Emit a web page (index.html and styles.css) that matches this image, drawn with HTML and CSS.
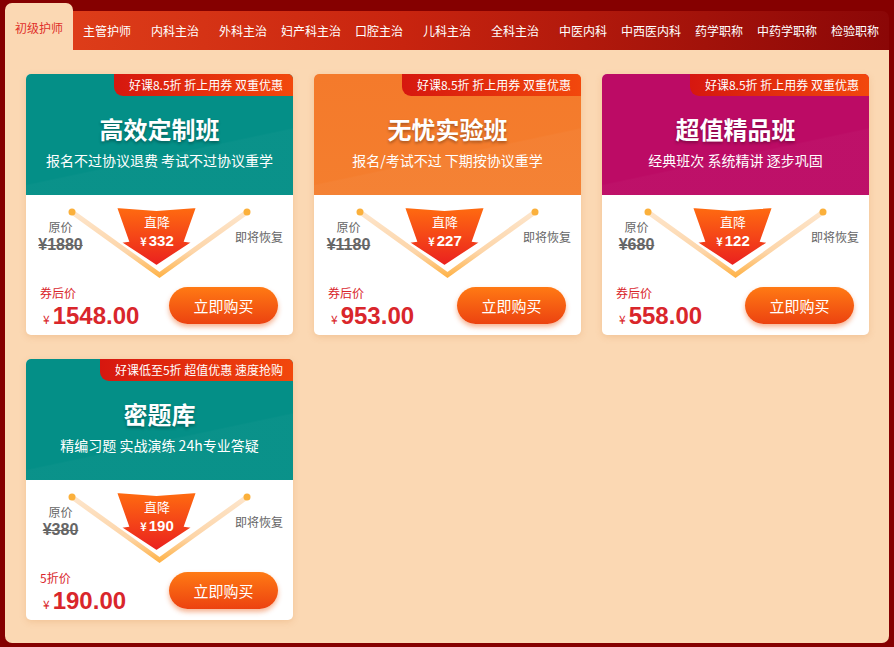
FILE: index.html
```html
<!DOCTYPE html>
<html lang="zh">
<head>
    <meta charset="UTF-8">
    <title>课程优惠</title>
    <link rel="stylesheet" href="styles.css">
</head>
<body>
<div class="page">
    <div class="tabs">
        <div class="tab active">初级护师</div>
        <div class="tab">主管护师</div>
        <div class="tab">内科主治</div>
        <div class="tab">外科主治</div>
        <div class="tab">妇产科主治</div>
        <div class="tab">口腔主治</div>
        <div class="tab">儿科主治</div>
        <div class="tab">全科主治</div>
        <div class="tab">中医内科</div>
        <div class="tab">中西医内科</div>
        <div class="tab">药学职称</div>
        <div class="tab">中药学职称</div>
        <div class="tab">检验职称</div>
    </div>

    <div class="panel">
        <div class="grid">

            <div class="card">
                <div class="head teal">
                    <div class="badge">好课8.5折 折上用券 双重优惠</div>
                    <div class="title">高效定制班</div>
                    <div class="sub">报名不过协议退费 考试不过协议重学</div>
                </div>
                <div class="bottom">
                    <svg class="deco" viewBox="0 0 267 90" width="267" height="90">
                        <defs>
                            <linearGradient id="fadeL" x1="0" x2="1"><stop offset="0" stop-color="#fde6cf" stop-opacity="0"/><stop offset="1" stop-color="#fcd2a6"/></linearGradient>
                            <linearGradient id="fadeR" x1="1" x2="0"><stop offset="0" stop-color="#fde6cf" stop-opacity="0"/><stop offset="1" stop-color="#fcd2a6"/></linearGradient>
                            <linearGradient id="band" gradientUnits="userSpaceOnUse" x1="0" y1="17" x2="0" y2="84"><stop offset="0" stop-color="#fde5cb"/><stop offset="0.6" stop-color="#fdd5a8"/><stop offset="1" stop-color="#ffb040"/></linearGradient>
                        </defs>
                        <path d="M0 17H46" stroke="url(#fadeL)" stroke-width="2"/>
                        <path d="M221 17H267" stroke="url(#fadeR)" stroke-width="2"/>
                        <polyline points="46,17 133.5,80 221,17" fill="none" stroke="url(#band)" stroke-width="5"/>
                        <circle cx="46" cy="17" r="3.5" fill="#fbb03b"/>
                        <circle cx="221" cy="17" r="3.5" fill="#fbb03b"/>
                    </svg>
                    <div class="compare">
                        <div class="orig"><div class="orig-label">原价</div><div class="old">¥1880</div></div>
                        <div class="drop">
                            <svg viewBox="0 0 83 61" width="83" height="61"><defs><linearGradient id="arr" x1="0" y1="0" x2="0" y2="1"><stop offset="0" stop-color="#ff6c10"/><stop offset="1" stop-color="#ea1f1f"/></linearGradient></defs><polygon points="1,1 41.5,4 82,1 70,35 78,36 41.5,60 5,36 13,35" fill="url(#arr)" stroke="#fff" stroke-width="2"/></svg>
                            <div class="drop-text"><div class="drop-label">直降</div><div class="amt"><small>¥</small>332</div></div>
                        </div>
                        <div class="restore">即将恢复</div>
                    </div>
                    <div class="buy">
                        <div class="after"><div class="label">券后价</div><div class="price"><small>¥</small>1548.00</div></div>
                        <button class="btn">立即购买</button>
                    </div>
                </div>
            </div>

            <div class="card">
                <div class="head orange">
                    <div class="badge">好课8.5折 折上用券 双重优惠</div>
                    <div class="title">无忧实验班</div>
                    <div class="sub">报名/考试不过 下期按协议重学</div>
                </div>
                <div class="bottom">
                    <svg class="deco" viewBox="0 0 267 90" width="267" height="90">
                        <path d="M0 17H46" stroke="url(#fadeL)" stroke-width="2"/>
                        <path d="M221 17H267" stroke="url(#fadeR)" stroke-width="2"/>
                        <polyline points="46,17 133.5,80 221,17" fill="none" stroke="url(#band)" stroke-width="5"/>
                        <circle cx="46" cy="17" r="3.5" fill="#fbb03b"/>
                        <circle cx="221" cy="17" r="3.5" fill="#fbb03b"/>
                    </svg>
                    <div class="compare">
                        <div class="orig"><div class="orig-label">原价</div><div class="old">¥1180</div></div>
                        <div class="drop">
                            <svg viewBox="0 0 83 61" width="83" height="61"><polygon points="1,1 41.5,4 82,1 70,35 78,36 41.5,60 5,36 13,35" fill="url(#arr)" stroke="#fff" stroke-width="2"/></svg>
                            <div class="drop-text"><div class="drop-label">直降</div><div class="amt"><small>¥</small>227</div></div>
                        </div>
                        <div class="restore">即将恢复</div>
                    </div>
                    <div class="buy">
                        <div class="after"><div class="label">券后价</div><div class="price"><small>¥</small>953.00</div></div>
                        <button class="btn">立即购买</button>
                    </div>
                </div>
            </div>

            <div class="card">
                <div class="head magenta">
                    <div class="badge">好课8.5折 折上用券 双重优惠</div>
                    <div class="title">超值精品班</div>
                    <div class="sub">经典班次 系统精讲 逐步巩固</div>
                </div>
                <div class="bottom">
                    <svg class="deco" viewBox="0 0 267 90" width="267" height="90">
                        <path d="M0 17H46" stroke="url(#fadeL)" stroke-width="2"/>
                        <path d="M221 17H267" stroke="url(#fadeR)" stroke-width="2"/>
                        <polyline points="46,17 133.5,80 221,17" fill="none" stroke="url(#band)" stroke-width="5"/>
                        <circle cx="46" cy="17" r="3.5" fill="#fbb03b"/>
                        <circle cx="221" cy="17" r="3.5" fill="#fbb03b"/>
                    </svg>
                    <div class="compare">
                        <div class="orig"><div class="orig-label">原价</div><div class="old">¥680</div></div>
                        <div class="drop">
                            <svg viewBox="0 0 83 61" width="83" height="61"><polygon points="1,1 41.5,4 82,1 70,35 78,36 41.5,60 5,36 13,35" fill="url(#arr)" stroke="#fff" stroke-width="2"/></svg>
                            <div class="drop-text"><div class="drop-label">直降</div><div class="amt"><small>¥</small>122</div></div>
                        </div>
                        <div class="restore">即将恢复</div>
                    </div>
                    <div class="buy">
                        <div class="after"><div class="label">券后价</div><div class="price"><small>¥</small>558.00</div></div>
                        <button class="btn">立即购买</button>
                    </div>
                </div>
            </div>

            <div class="card">
                <div class="head teal">
                    <div class="badge">好课低至5折 超值优惠 速度抢购</div>
                    <div class="title">密题库</div>
                    <div class="sub">精编习题 实战演练 24h专业答疑</div>
                </div>
                <div class="bottom">
                    <svg class="deco" viewBox="0 0 267 90" width="267" height="90">
                        <path d="M0 17H46" stroke="url(#fadeL)" stroke-width="2"/>
                        <path d="M221 17H267" stroke="url(#fadeR)" stroke-width="2"/>
                        <polyline points="46,17 133.5,80 221,17" fill="none" stroke="url(#band)" stroke-width="5"/>
                        <circle cx="46" cy="17" r="3.5" fill="#fbb03b"/>
                        <circle cx="221" cy="17" r="3.5" fill="#fbb03b"/>
                    </svg>
                    <div class="compare">
                        <div class="orig"><div class="orig-label">原价</div><div class="old">¥380</div></div>
                        <div class="drop">
                            <svg viewBox="0 0 83 61" width="83" height="61"><polygon points="1,1 41.5,4 82,1 70,35 78,36 41.5,60 5,36 13,35" fill="url(#arr)" stroke="#fff" stroke-width="2"/></svg>
                            <div class="drop-text"><div class="drop-label">直降</div><div class="amt"><small>¥</small>190</div></div>
                        </div>
                        <div class="restore">即将恢复</div>
                    </div>
                    <div class="buy">
                        <div class="after"><div class="label">5折价</div><div class="price"><small>¥</small>190.00</div></div>
                        <button class="btn">立即购买</button>
                    </div>
                </div>
            </div>

        </div>
    </div>
</div>
</body>
</html>
```

FILE: styles.css
```css
* {
    margin: 0;
    padding: 0;
    box-sizing: border-box;
    font-family: "Noto Sans CJK SC", "Noto Sans", sans-serif;
}
body {
    background: #850000;
    width: 894px;
    height: 647px;
    overflow: hidden;
}
.page {
    padding: 11px 5px 4px 5px;
}
.tabs {
    display: flex;
    height: 39px;
    background: linear-gradient(90deg, #e2421b 0%, #c8240f 45%, #8b0707 100%);
    border-radius: 0 7px 0 0;
}
.tab {
    flex: 1;
    color: #fff;
    font-size: 12px;
    line-height: 39px;
    text-align: center;
    white-space: nowrap;
}
.tab.active {
    margin-top: -8px;
    height: 47px;
    padding-top: 3px;
    line-height: 44px;
    background: #fbd8b3;
    color: #e0302a;
    border-radius: 7px 7px 0 0;
}
.panel {
    height: 593px;
    background: #fbd8b3;
    border-radius: 0 0 7px 7px;
    padding: 24px 21px;
}
.grid {
    display: grid;
    grid-template-columns: repeat(3, 267px);
    column-gap: 21px;
    row-gap: 24px;
}
.card {
    height: 261px;
    background: #fff;
    border-radius: 5px;
    overflow: hidden;
    box-shadow: 0 2px 6px rgba(220, 140, 70, 0.25);
}
.head {
    position: relative;
    height: 121px;
    padding-top: 40px;
    text-align: center;
    color: #fff;
}
.teal {
    background: linear-gradient(168deg, rgba(255, 255, 255, 0) 62%, rgba(255, 255, 255, 0.025) 63%), #048f87;
}
.orange {
    background: linear-gradient(168deg, rgba(255, 255, 255, 0) 62%, rgba(255, 255, 255, 0.03) 63%), linear-gradient(180deg, #f47a2b, #f47e2e);
}
.magenta {
    background: linear-gradient(168deg, rgba(255, 255, 255, 0) 62%, rgba(255, 255, 255, 0.025) 63%), #bc0b65;
}
.badge {
    position: absolute;
    top: 0;
    right: 0;
    height: 22px;
    line-height: 22px;
    padding: 0 10px 0 15px;
    font-size: 12px;
    white-space: nowrap;
    background: linear-gradient(90deg, #d6170f, #f2480c);
    border-radius: 0 0 0 9px;
}
.title {
    font-size: 24px;
    font-weight: bold;
    line-height: 30px;
    text-shadow: 0 2px 3px rgba(0, 0, 0, 0.3);
}
.sub {
    margin-top: 7px;
    font-size: 14px;
    line-height: 18px;
}
.bottom {
    position: relative;
    height: 140px;
}
.deco {
    position: absolute;
    top: 0;
    left: 0;
}
.compare {
    position: relative;
    display: flex;
    justify-content: space-between;
    align-items: flex-start;
    height: 85px;
    padding: 0 8px 0 9px;
    color: #666;
}
.orig {
    width: 51px;
    margin-top: 25px;
    text-align: center;
}
.orig-label {
    font-size: 12px;
    line-height: 14px;
}
.old {
    margin-top: 2px;
    font-family: "Liberation Sans", Arial, sans-serif;
    font-size: 16px;
    font-weight: bold;
    line-height: 18px;
    text-decoration: line-through;
}
.drop {
    position: relative;
    width: 83px;
    height: 61px;
    margin: 11px 7px 0 0;
}
.drop svg {
    position: absolute;
    top: 0;
    left: 0;
}
.drop-text {
    position: relative;
    padding-top: 8px;
    text-align: center;
    color: #fff;
}
.drop-label {
    font-size: 13px;
    line-height: 16px;
}
.amt {
    margin-top: 2px;
    font-family: "Liberation Sans", Arial, sans-serif;
    font-size: 15px;
    font-weight: bold;
    line-height: 18px;
}
.amt small {
    font-size: 11px;
    margin-right: 2px;
}
.restore {
    margin-top: 35px;
    padding-right: 2px;
    font-size: 12px;
    line-height: 14px;
}
.buy {
    display: flex;
    justify-content: space-between;
    align-items: flex-start;
    padding: 0 15px 0 14px;
}
.after {
    margin-top: 6px;
    color: #d9262b;
}
.label {
    font-size: 12px;
    line-height: 14px;
}
.price {
    margin-top: 2px;
    padding-left: 3px;
    font-family: "Liberation Sans", Arial, sans-serif;
    font-size: 24px;
    font-weight: bold;
    line-height: 28px;
}
.price small {
    font-size: 12px;
    font-weight: normal;
    margin-right: 3px;
}
.btn {
    margin-top: 7px;
    width: 109px;
    height: 37px;
    border: none;
    border-radius: 19px;
    background: linear-gradient(180deg, #ff7a14, #ec4210);
    color: #fff;
    font-size: 15px;
    box-shadow: 0 3px 5px rgba(236, 90, 20, 0.45);
    cursor: pointer;
}
```
